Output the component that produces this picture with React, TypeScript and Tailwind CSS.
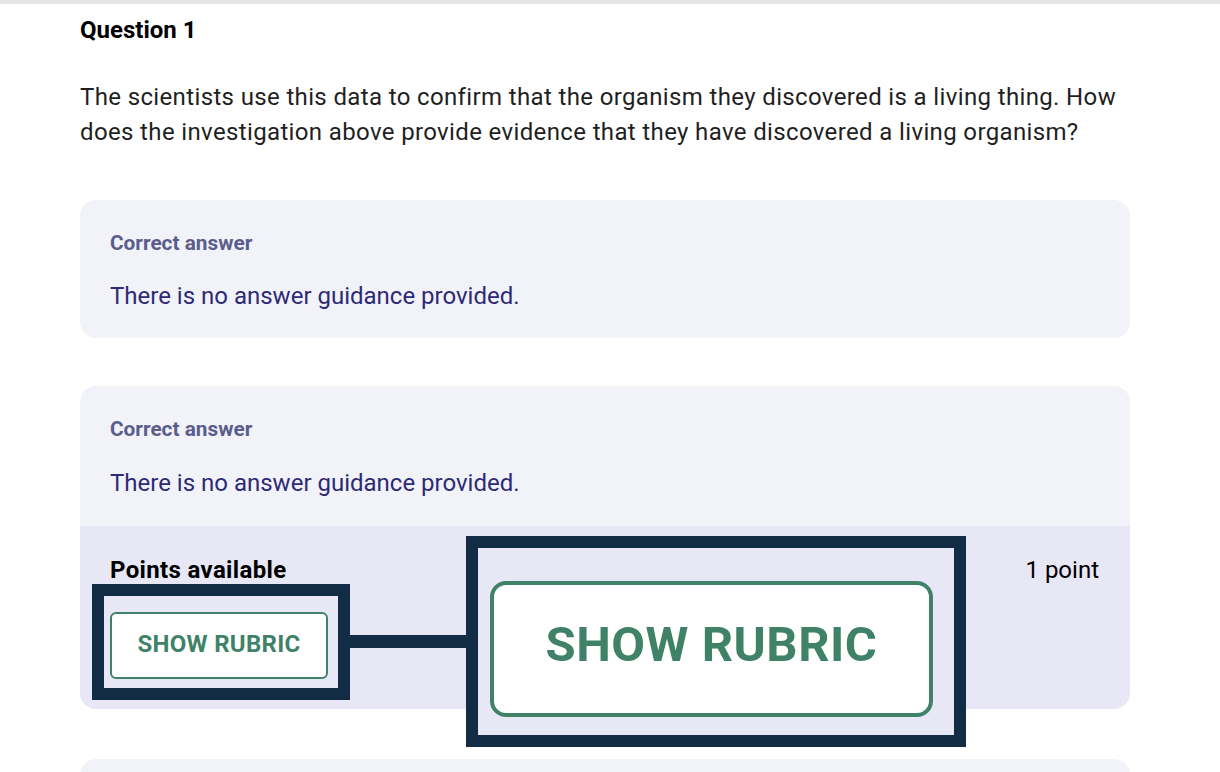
export default function App() {
  return (
    <div className="relative h-[772px] bg-white font-['Roboto',sans-serif] overflow-hidden">
      {/* top rule */}
      <div className="h-[4px] bg-[#e4e4e6]" />

      <div className="px-[80px] pr-[90px]">
        <h2 className="mt-[13px] text-[24px] leading-[26px] font-bold text-black">Question 1</h2>

        <p className="mt-[37px] text-[24px] leading-[35px] tracking-[0.36px] text-[#1f1f1f]">
          The scientists use this data to confirm that the organism they discovered is a living thing. How
          does the investigation above provide evidence that they have discovered a living organism?
        </p>

        {/* Card 1 */}
        <div className="mt-[50px] rounded-[16px] bg-[#f2f3f9] px-[30px] pt-[31px] pb-[28px]">
          <div className="text-[20.8px] leading-[24px] font-bold text-[#5b5d8c]">Correct answer</div>
          <div className="mt-[27px] text-[24px] leading-[28px] text-[#2e2a75]">
            There is no answer guidance provided.
          </div>
        </div>

        {/* Card 2 */}
        <div className="mt-[48px] rounded-[16px] bg-[#f2f3f9] overflow-hidden">
          <div className="px-[30px] pt-[31px] pb-[29px]">
            <div className="text-[20.8px] leading-[24px] font-bold text-[#5b5d8c]">Correct answer</div>
            <div className="mt-[28px] text-[24px] leading-[28px] text-[#2e2a75]">
              There is no answer guidance provided.
            </div>
          </div>
          <div className="bg-[#e7e7f5] px-[30px] pt-[30px] pb-[30px]">
            <div className="flex items-center justify-between">
              <span className="text-[24px] leading-[28px] font-bold tracking-[0.35px] text-black">Points available</span>
              <span className="pr-[1px] text-[24px] leading-[28px] text-black">1 point</span>
            </div>
            <button className="mt-[28px] flex h-[67px] w-[218px] items-center justify-center rounded-[6px] border-2 border-[#3f8268] bg-white pb-[4px] text-[24px] font-bold tracking-[0.3px] text-[#3f8268]">
              SHOW RUBRIC
            </button>
          </div>
        </div>

        {/* Card 3 (cut off) */}
        <div className="mt-[50px] h-[16px] rounded-t-[16px] bg-[#f2f3f9]" />
      </div>

      {/* annotation: highlight box around the button */}
      <div className="absolute left-[92px] top-[584px] h-[116px] w-[258px] border-[12px] border-[#132c45]" />
      {/* connector */}
      <div className="absolute left-[350px] top-[635px] h-[13px] w-[116px] bg-[#132c45]" />
      {/* magnified view */}
      <div className="absolute left-[466px] top-[536px] h-[211px] w-[500px] border-[12px] border-[#132c45] bg-[#e7e7f5]">
        <div className="ml-[12px] mt-[33px] flex h-[136px] w-[443px] items-center justify-center rounded-[16px] border-[4px] border-[#3f8268] bg-white pb-[8px] blur-[0.6px]">
          <span className="text-[49px] font-bold tracking-[0.5px] text-[#3f8268]">SHOW RUBRIC</span>
        </div>
      </div>
    </div>
  )
}
